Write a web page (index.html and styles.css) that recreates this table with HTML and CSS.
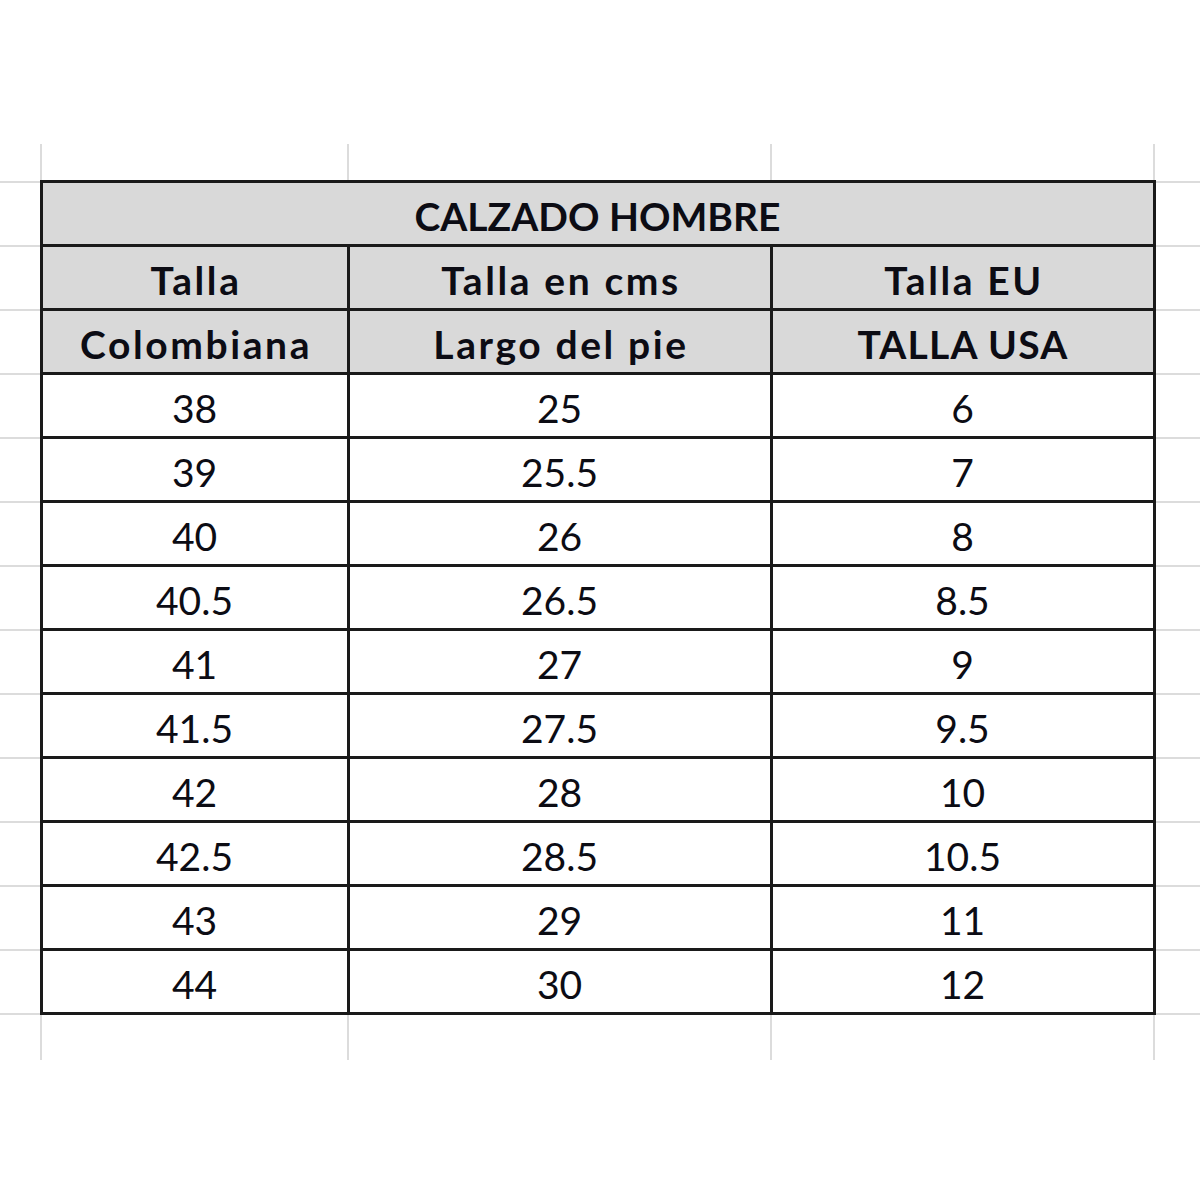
FILE: index.html
```html
<!DOCTYPE html>
<html lang="es">
<head>
<meta charset="utf-8">
<title>Calzado Hombre</title>
<link rel="stylesheet" href="styles.css">
</head>
<body>
<table class="sheet">
  <colgroup>
    <col class="c-edge-l">
    <col class="c1">
    <col class="c2">
    <col class="c3">
    <col class="c-edge-r">
  </colgroup>
  <tr class="spacer top">
    <td class="edge"></td><td class="g"></td><td class="g"></td><td class="g"></td><td class="edge"></td>
  </tr>
  <tr class="row head">
    <td class="edge"></td><td class="cell" colspan="3">CALZADO HOMBRE</td><td class="edge"></td>
  </tr>
  <tr class="row head">
    <td class="edge"></td><td class="cell wide">Talla</td><td class="cell wide">Talla en cms</td><td class="cell wide">Talla EU</td><td class="edge"></td>
  </tr>
  <tr class="row head">
    <td class="edge"></td><td class="cell wide">Colombiana</td><td class="cell wide">Largo del pie</td><td class="cell caps">TALLA USA</td><td class="edge"></td>
  </tr>
  <tr class="row"><td class="edge"></td><td class="cell">38</td><td class="cell">25</td><td class="cell">6</td><td class="edge"></td></tr>
  <tr class="row"><td class="edge"></td><td class="cell">39</td><td class="cell">25.5</td><td class="cell">7</td><td class="edge"></td></tr>
  <tr class="row"><td class="edge"></td><td class="cell">40</td><td class="cell">26</td><td class="cell">8</td><td class="edge"></td></tr>
  <tr class="row"><td class="edge"></td><td class="cell">40.5</td><td class="cell">26.5</td><td class="cell">8.5</td><td class="edge"></td></tr>
  <tr class="row"><td class="edge"></td><td class="cell">41</td><td class="cell">27</td><td class="cell">9</td><td class="edge"></td></tr>
  <tr class="row"><td class="edge"></td><td class="cell">41.5</td><td class="cell">27.5</td><td class="cell">9.5</td><td class="edge"></td></tr>
  <tr class="row"><td class="edge"></td><td class="cell">42</td><td class="cell">28</td><td class="cell">10</td><td class="edge"></td></tr>
  <tr class="row"><td class="edge"></td><td class="cell">42.5</td><td class="cell">28.5</td><td class="cell">10.5</td><td class="edge"></td></tr>
  <tr class="row"><td class="edge"></td><td class="cell">43</td><td class="cell">29</td><td class="cell">11</td><td class="edge"></td></tr>
  <tr class="row"><td class="edge"></td><td class="cell">44</td><td class="cell">30</td><td class="cell">12</td><td class="edge"></td></tr>
  <tr class="spacer bottom">
    <td class="edge"></td><td class="g"></td><td class="g"></td><td class="g"></td><td class="edge"></td>
  </tr>
</table>
</body>
</html>
```
FILE: styles.css
```css
html, body {
  margin: 0;
  padding: 0;
  background: #ffffff;
}

.sheet {
  margin-top: 144px;
  border-collapse: collapse;
  table-layout: fixed;
  width: 1200px;
  font-family: Lato, "Liberation Sans", sans-serif;
  color: #0c0c14;
}

.c-edge-l { width: 41px; }
.c1 { width: 307px; }
.c2 { width: 423px; }
.c3 { width: 383px; }
.c-edge-r { width: 46px; }

.sheet td {
  padding: 0;
}

.spacer.top td { height: 36px; }
.spacer.bottom td { height: 45px; }

.spacer .g {
  border-left: 2px solid #dcdcdc;
  border-right: 2px solid #dcdcdc;
}

.row td {
  height: 55px;
}

.row .edge {
  border-top: 2px solid #dcdcdc;
  border-bottom: 2px solid #dcdcdc;
}

.cell {
  border: 3px solid #1a1a1a;
  text-align: center;
  vertical-align: middle;
  font-size: 39px;
  line-height: 1;
  padding-top: 6px !important;
}

.head .cell {
  background: #d9d9d9;
  font-weight: 700;
}

.head .cell.wide {
  letter-spacing: 2.6px;
  padding-left: 3px !important;
}

.head .cell.caps {
  letter-spacing: 1.2px;
  padding-left: 1px !important;
}
```
